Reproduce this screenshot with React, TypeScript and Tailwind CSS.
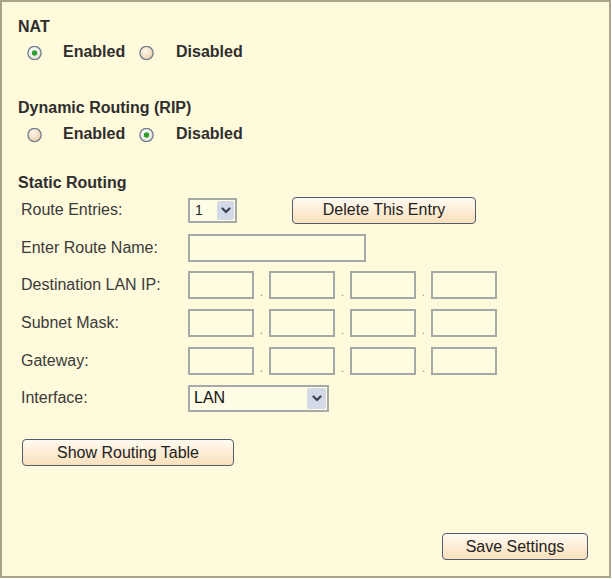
import React from "react";

const FONT = { fontFamily: '"Liberation Sans", Arial, sans-serif' };

/* radio button drawn as svg */
function Radio({ checked }: { checked?: boolean }) {
  return (
    <svg width="15" height="15" viewBox="0 0 15 15" className="shrink-0">
      <defs>
        <radialGradient id={checked ? "rg-on" : "rg-off"} cx="40%" cy="35%" r="70%">
          <stop offset="0%" stopColor={checked ? "#ffffff" : "#fff6ea"} />
          <stop offset="100%" stopColor={checked ? "#e4e1d4" : "#ebcfab"} />
        </radialGradient>
      </defs>
      <circle cx="7.5" cy="7.5" r="6.6" fill={`url(#${checked ? "rg-on" : "rg-off"})`} stroke="#6f7e8e" strokeWidth="1.3" />
      {checked && <circle cx="7.5" cy="7.5" r="2.7" fill="#2f9e2f" />}
    </svg>
  );
}

function Chevron() {
  return (
    <svg width="10" height="7" viewBox="0 0 10 7">
      <polyline points="1.5,1.5 5,5 8.5,1.5" fill="none" stroke="#3c4454" strokeWidth="2.2" strokeLinecap="round" strokeLinejoin="round" />
    </svg>
  );
}

function RadioRow({ enabled }: { enabled: boolean }) {
  return (
    <div className="flex h-[24px] items-center pl-[25px] text-[16px] font-bold leading-[18px] text-[#2e2e2e]">
      <span className="translate-y-[1.5px]"><Radio checked={enabled} /></span>
      <span className="ml-[21px] w-[76px]">Enabled</span>
      <span className="translate-y-[1.5px]"><Radio checked={!enabled} /></span>
      <span className="ml-[22px]">Disabled</span>
    </div>
  );
}

function Btn({ label, w }: { label: string; w: string }) {
  return (
    <button
      className={`${w} h-[27px] rounded-[4px] border border-[#4f5d70] bg-gradient-to-b from-[#fffaf0] to-[#fbe0bc] text-[16px] leading-[18px] text-[#222]`}
      style={FONT}
    >
      {label}
    </button>
  );
}

function IpGroup() {
  return (
    <div className="flex items-center">
      {[0, 1, 2, 3].map((i) => (
        <React.Fragment key={i}>
          {i > 0 && (
            <span className="flex h-[28px] w-[15px] items-end justify-center pb-[2px] text-[12px] leading-[10px] text-[#a89060]">.</span>
          )}
          <div className="h-[28px] w-[66px] border-2 border-[#a3aaa8] bg-[#fffcdf]" />
        </React.Fragment>
      ))}
    </div>
  );
}

function Row({ label, children }: { label: string; children: React.ReactNode }) {
  return (
    <div className="flex h-[37.6px] items-center">
      <span className="w-[170px] pl-[3px] text-[16px] leading-[18px] text-[#3a3a3a]">{label}</span>
      {children}
    </div>
  );
}

export default function App() {
  return (
    <div className="h-[579px] w-[612px] bg-white" style={FONT}>
      <div className="flex h-[578px] w-[611px] flex-col border-2 border-[#aaa48c] bg-[#fffadb]">
        {/* NAT */}
        <div className="mt-[15.5px] pl-[16px] text-[16px] font-bold leading-[18px] text-[#2e2e2e]">NAT</div>
        <div className="mt-[4px]">
          <RadioRow enabled={true} />
        </div>

        {/* RIP */}
        <div className="mt-[35px] pl-[16px] text-[16px] font-bold leading-[18px] text-[#2e2e2e]">Dynamic Routing (RIP)</div>
        <div className="mt-[5px]">
          <RadioRow enabled={false} />
        </div>

        {/* Static routing */}
        <div className="mt-[28px] pl-[16px] text-[16px] font-bold leading-[18px] text-[#2e2e2e]">Static Routing</div>
        <div className="pl-[16px]">
          <Row label="Route Entries:">
            <div className="flex h-[25px] w-[49px] items-center justify-between border-2 border-[#a3aaa8] bg-[#fffce6] pl-[5px] pr-[1px]">
              <span className="text-[14px] leading-[16px] text-[#222]">1</span>
              <span className="flex h-[19px] w-[17px] items-center justify-center rounded-[2px] bg-[#d3d9e6]">
                <Chevron />
              </span>
            </div>
            <div className="ml-[55px]">
              <Btn label="Delete This Entry" w="w-[184px]" />
            </div>
          </Row>
          <Row label="Enter Route Name:">
            <div className="h-[28px] w-[178px] border-2 border-[#a3aaa8] bg-[#fffcdf]" />
          </Row>
          <Row label="Destination LAN IP:">
            <IpGroup />
          </Row>
          <Row label="Subnet Mask:">
            <IpGroup />
          </Row>
          <Row label="Gateway:">
            <IpGroup />
          </Row>
          <Row label="Interface:">
            <div className="flex h-[27px] w-[141px] items-center justify-between border-2 border-[#a3aaa8] bg-[#fffce6] pl-[4px] pr-[1px]">
              <span className="text-[16px] leading-[18px] text-[#111]">LAN</span>
              <span className="flex h-[21px] w-[19px] items-center justify-center rounded-[2px] bg-[#d3d9e6]">
                <Chevron />
              </span>
            </div>
          </Row>
        </div>

        <div className="mt-[22.4px] pl-[20px]">
          <Btn label="Show Routing Table" w="w-[212px]" />
        </div>

        <div className="mt-auto mb-[16px] flex justify-end pr-[21px]">
          <Btn label="Save Settings" w="w-[146px]" />
        </div>
      </div>
    </div>
  );
}
